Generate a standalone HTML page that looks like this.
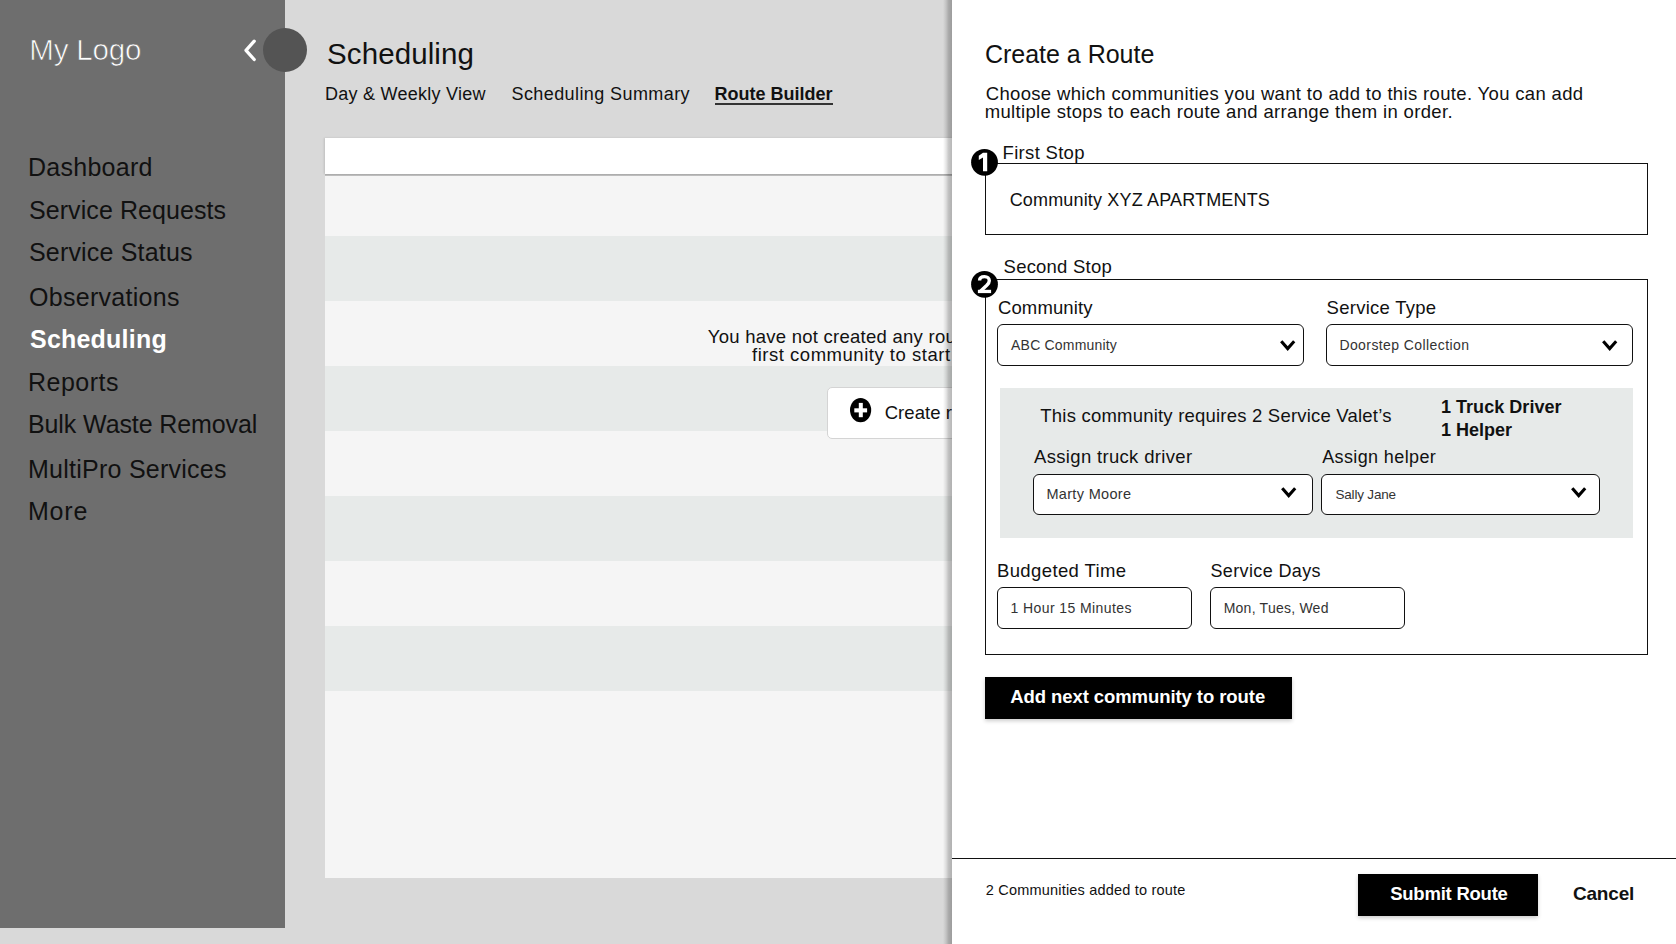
<!DOCTYPE html>
<html><head><meta charset="utf-8"><style>
html,body{margin:0;padding:0;}
body{width:1676px;height:944px;overflow:hidden;position:relative;background:#d9d9d9;font-family:"Liberation Sans",sans-serif;}
.t{position:absolute;white-space:nowrap;line-height:1;}
.box{position:absolute;box-sizing:border-box;}
.chev{position:absolute;}
.sel{position:absolute;box-sizing:border-box;background:#fff;border:1.5px solid #111;border-radius:6px;}
</style></head><body>
<div class="box" style="left:0;top:0;width:285px;height:928px;background:#6e6e6e"></div>
<svg style="position:absolute;left:240px;top:36px" width="20" height="29" viewBox="0 0 20 29"><path d="M14.2 5.2 L6 14.3 L14.2 23.5" fill="none" stroke="#fff" stroke-width="3.3" stroke-linecap="round" stroke-linejoin="round"/></svg>
<div class="box" style="left:263px;top:28px;width:44px;height:44px;border-radius:50%;background:#545454"></div>
<div class="box" style="left:325px;top:138px;width:700px;height:36px;background:#fff;box-shadow:-1px 0 2px rgba(0,0,0,0.12)"></div>
<div class="box" style="left:325px;top:176px;width:700px;height:60px;background:#f5f5f5"></div><div class="box" style="left:325px;top:236px;width:700px;height:65px;background:#e7eae9"></div><div class="box" style="left:325px;top:301px;width:700px;height:65px;background:#f5f5f5"></div><div class="box" style="left:325px;top:366px;width:700px;height:65px;background:#e7eae9"></div><div class="box" style="left:325px;top:431px;width:700px;height:65px;background:#f5f5f5"></div><div class="box" style="left:325px;top:496px;width:700px;height:65px;background:#e7eae9"></div><div class="box" style="left:325px;top:561px;width:700px;height:65px;background:#f5f5f5"></div><div class="box" style="left:325px;top:626px;width:700px;height:65px;background:#e7eae9"></div><div class="box" style="left:325px;top:691px;width:700px;height:187px;background:#f5f5f5"></div>
<div class="box" style="left:325px;top:174px;width:700px;height:2px;background:linear-gradient(#a6a6a6,#c4c4c4)"></div>
<div class="box" style="left:715px;top:103px;width:118px;height:2px;background:#333"></div>
<div class="box" style="left:826.5px;top:386.5px;width:200px;height:52.5px;background:#fff;border:1px solid #d4d4d4;border-radius:5px"></div>
<svg style="position:absolute;left:849px;top:397px" width="24" height="27" viewBox="0 0 24 27"><ellipse cx="11.6" cy="13.1" rx="10.6" ry="12.2" fill="#000"/><rect x="5.3" y="11.3" width="12.8" height="4.1" fill="#fff"/><rect x="9.8" y="5.9" width="4" height="14.3" fill="#fff"/></svg>
<div class="t" style="left:29.30px;top:35.00px;font-size:29.5px;font-weight:normal;color:#fff;letter-spacing:-0.173px;-webkit-text-stroke:0.7px #6e6e6e;">My Logo</div><div class="t" style="left:28.00px;top:155.00px;font-size:25px;font-weight:normal;color:#111;letter-spacing:0.263px;">Dashboard</div><div class="t" style="left:29.00px;top:198.00px;font-size:25px;font-weight:normal;color:#111;letter-spacing:0.072px;">Service Requests</div><div class="t" style="left:29.00px;top:240.00px;font-size:25px;font-weight:normal;color:#111;letter-spacing:0.178px;">Service Status</div><div class="t" style="left:29.00px;top:285.00px;font-size:25px;font-weight:normal;color:#111;letter-spacing:0.292px;">Observations</div><div class="t" style="left:30.00px;top:327.00px;font-size:25px;font-weight:bold;color:#fff;letter-spacing:0.216px;">Scheduling</div><div class="t" style="left:28.00px;top:370.00px;font-size:25px;font-weight:normal;color:#111;letter-spacing:0.494px;">Reports</div><div class="t" style="left:28.00px;top:412.00px;font-size:25px;font-weight:normal;color:#111;letter-spacing:-0.102px;">Bulk Waste Removal</div><div class="t" style="left:28.00px;top:457.00px;font-size:25px;font-weight:normal;color:#111;letter-spacing:0.250px;">MultiPro Services</div><div class="t" style="left:28.00px;top:499.00px;font-size:25px;font-weight:normal;color:#111;letter-spacing:0.782px;">More</div><div class="t" style="left:327.10px;top:39.00px;font-size:29.5px;font-weight:normal;color:#111;letter-spacing:0.093px;">Scheduling</div><div class="t" style="left:325.10px;top:85.00px;font-size:18px;font-weight:normal;color:#111;letter-spacing:0.244px;">Day &amp; Weekly View</div><div class="t" style="left:511.50px;top:85.00px;font-size:18px;font-weight:normal;color:#111;letter-spacing:0.413px;">Scheduling Summary</div><div class="t" style="left:714.50px;top:85.00px;font-size:18px;font-weight:bold;color:#111;letter-spacing:0.009px;">Route Builder</div><div class="t" style="left:707.80px;top:328.00px;font-size:18.5px;font-weight:normal;color:#111;letter-spacing:0.256px;">You have not created any routes yet. Add your</div><div class="t" style="left:752.00px;top:346.00px;font-size:18.5px;font-weight:normal;color:#111;letter-spacing:0.521px;">first community to start building a route.</div><div class="t" style="left:884.70px;top:404.00px;font-size:18.5px;font-weight:normal;color:#111;letter-spacing:0.052px;">Create route</div>
<div class="box" style="left:943px;top:0;width:9px;height:944px;background:linear-gradient(to right,rgba(0,0,0,0),rgba(0,0,0,0.1) 35%,rgba(0,0,0,0.21) 60%,rgba(0,0,0,0.26) 85%,rgba(0,0,0,0.28))"></div>
<div class="box" style="left:952px;top:0;width:724px;height:944px;background:#fff"></div>
<div class="box" style="left:985px;top:163px;width:663px;height:72px;border:1px solid #111"></div>
<div class="box" style="left:985px;top:279px;width:663px;height:376px;border:1px solid #111"></div>
<svg style="position:absolute;left:965px;top:140px" width="45" height="45" viewBox="0 0 45 45"><circle cx="19.5" cy="22.35" r="13.4" fill="#000"/><path d="M18 12.8 L22.2 12.8 L22.2 31.2 L18 31.2 L18 17.4 L13.8 20 L13.8 15.8 Z" fill="#fff"/></svg>
<svg style="position:absolute;left:965px;top:262px" width="45" height="45" viewBox="0 0 45 45"><circle cx="19.5" cy="22.35" r="13.4" fill="#000"/><path d="M14.6 18.4 C14.6 15.9 16.6 14.6 19.5 14.6 C22.4 14.6 24.3 16.3 24.3 18.7 C24.3 20.7 23.2 21.9 21.8 23.3 L15.2 29.4" fill="none" stroke="#fff" stroke-width="3.4"/><rect x="12.9" y="27.8" width="13.2" height="3.3" fill="#fff"/></svg>
<div class="sel" style="left:997px;top:324px;width:307px;height:42px"></div>
<div class="sel" style="left:1326px;top:324px;width:307px;height:42px"></div>
<div class="box" style="left:1000px;top:388px;width:633px;height:150px;background:#e7eae9"></div>
<div class="sel" style="left:1033px;top:473.5px;width:280px;height:41px"></div>
<div class="sel" style="left:1321px;top:473.5px;width:279px;height:41px"></div>
<div class="sel" style="left:997px;top:587px;width:195px;height:42px"></div>
<div class="sel" style="left:1210px;top:587px;width:195px;height:42px"></div>
<svg class="chev" style="left:1279.8px;top:340.3px" width="16" height="11" viewBox="0 0 16 11"><path d="M2.2 2.3 L7.7 8.6 L13.2 2.3" fill="none" stroke="#000" stroke-width="3" stroke-linecap="square" stroke-linejoin="miter"/></svg><svg class="chev" style="left:1602.3px;top:340.3px" width="16" height="11" viewBox="0 0 16 11"><path d="M2.2 2.3 L7.7 8.6 L13.2 2.3" fill="none" stroke="#000" stroke-width="3" stroke-linecap="square" stroke-linejoin="miter"/></svg><svg class="chev" style="left:1280.5px;top:486.6px" width="16" height="11" viewBox="0 0 16 11"><path d="M2.2 2.3 L7.7 8.6 L13.2 2.3" fill="none" stroke="#000" stroke-width="3" stroke-linecap="square" stroke-linejoin="miter"/></svg><svg class="chev" style="left:1570.5px;top:486.6px" width="16" height="11" viewBox="0 0 16 11"><path d="M2.2 2.3 L7.7 8.6 L13.2 2.3" fill="none" stroke="#000" stroke-width="3" stroke-linecap="square" stroke-linejoin="miter"/></svg>
<div class="box" style="left:985px;top:677px;width:307px;height:42px;background:#000;box-shadow:0 1.5px 4px rgba(0,0,0,0.2)"></div>
<div class="box" style="left:952px;top:857.5px;width:724px;height:1.5px;background:#111"></div>
<div class="box" style="left:1358px;top:874px;width:180px;height:42px;background:#000;box-shadow:0 1.5px 4px rgba(0,0,0,0.2)"></div>
<div class="t" style="left:985.00px;top:42.00px;font-size:25px;font-weight:normal;color:#111;letter-spacing:-0.018px;">Create a Route</div><div class="t" style="left:985.70px;top:85.00px;font-size:18.5px;font-weight:normal;color:#111;letter-spacing:0.342px;">Choose which communities you want to add to this route. You can add</div><div class="t" style="left:984.70px;top:103.00px;font-size:18.5px;font-weight:normal;color:#111;letter-spacing:0.343px;">multiple stops to each route and arrange them in order.</div><div class="t" style="left:1002.60px;top:144.00px;font-size:18.5px;font-weight:normal;color:#111;letter-spacing:0.303px;">First Stop</div><div class="t" style="left:1009.70px;top:191.00px;font-size:18px;font-weight:normal;color:#111;letter-spacing:0.162px;">Community XYZ APARTMENTS</div><div class="t" style="left:1003.60px;top:258.00px;font-size:18.5px;font-weight:normal;color:#111;letter-spacing:0.215px;">Second Stop</div><div class="t" style="left:998.00px;top:299.00px;font-size:18.5px;font-weight:normal;color:#111;letter-spacing:0.113px;">Community</div><div class="t" style="left:1326.60px;top:299.00px;font-size:18.5px;font-weight:normal;color:#111;letter-spacing:0.269px;">Service Type</div><div class="t" style="left:1011.10px;top:338.00px;font-size:14px;font-weight:normal;color:#333;letter-spacing:0.186px;">ABC Community</div><div class="t" style="left:1339.40px;top:338.00px;font-size:14px;font-weight:normal;color:#333;letter-spacing:0.412px;">Doorstep Collection</div><div class="t" style="left:1040.30px;top:407.00px;font-size:18.5px;font-weight:normal;color:#111;letter-spacing:0.211px;">This community requires 2 Service Valet’s</div><div class="t" style="left:1440.90px;top:398.00px;font-size:18px;font-weight:bold;color:#111;letter-spacing:0.049px;">1 Truck Driver</div><div class="t" style="left:1440.90px;top:421.00px;font-size:18px;font-weight:bold;color:#111;letter-spacing:-0.004px;">1 Helper</div><div class="t" style="left:1034.00px;top:448.00px;font-size:18.5px;font-weight:normal;color:#111;letter-spacing:0.328px;">Assign truck driver</div><div class="t" style="left:1322.20px;top:448.00px;font-size:18px;font-weight:normal;color:#111;letter-spacing:0.378px;">Assign helper</div><div class="t" style="left:1046.40px;top:487.00px;font-size:14.5px;font-weight:normal;color:#333;letter-spacing:0.329px;">Marty Moore</div><div class="t" style="left:1335.40px;top:488.00px;font-size:13.5px;font-weight:normal;color:#333;letter-spacing:-0.175px;">Sally Jane</div><div class="t" style="left:996.90px;top:562.00px;font-size:18.5px;font-weight:normal;color:#111;letter-spacing:0.401px;">Budgeted Time</div><div class="t" style="left:1210.50px;top:562.00px;font-size:18px;font-weight:normal;color:#111;letter-spacing:0.361px;">Service Days</div><div class="t" style="left:1010.50px;top:601.00px;font-size:14px;font-weight:normal;color:#333;letter-spacing:0.413px;">1 Hour 15 Minutes</div><div class="t" style="left:1223.70px;top:601.00px;font-size:14px;font-weight:normal;color:#333;letter-spacing:0.235px;">Mon, Tues, Wed</div><div class="t" style="left:1010.20px;top:688.00px;font-size:18.5px;font-weight:bold;color:#fff;letter-spacing:-0.075px;">Add next community to route</div><div class="t" style="left:985.80px;top:883.00px;font-size:14.5px;font-weight:normal;color:#111;letter-spacing:0.193px;">2 Communities added to route</div><div class="t" style="left:1390.20px;top:885.00px;font-size:18.5px;font-weight:bold;color:#fff;letter-spacing:-0.232px;">Submit Route</div><div class="t" style="left:1572.90px;top:884.00px;font-size:19px;font-weight:bold;color:#111;letter-spacing:-0.166px;">Cancel</div>
</body></html>
